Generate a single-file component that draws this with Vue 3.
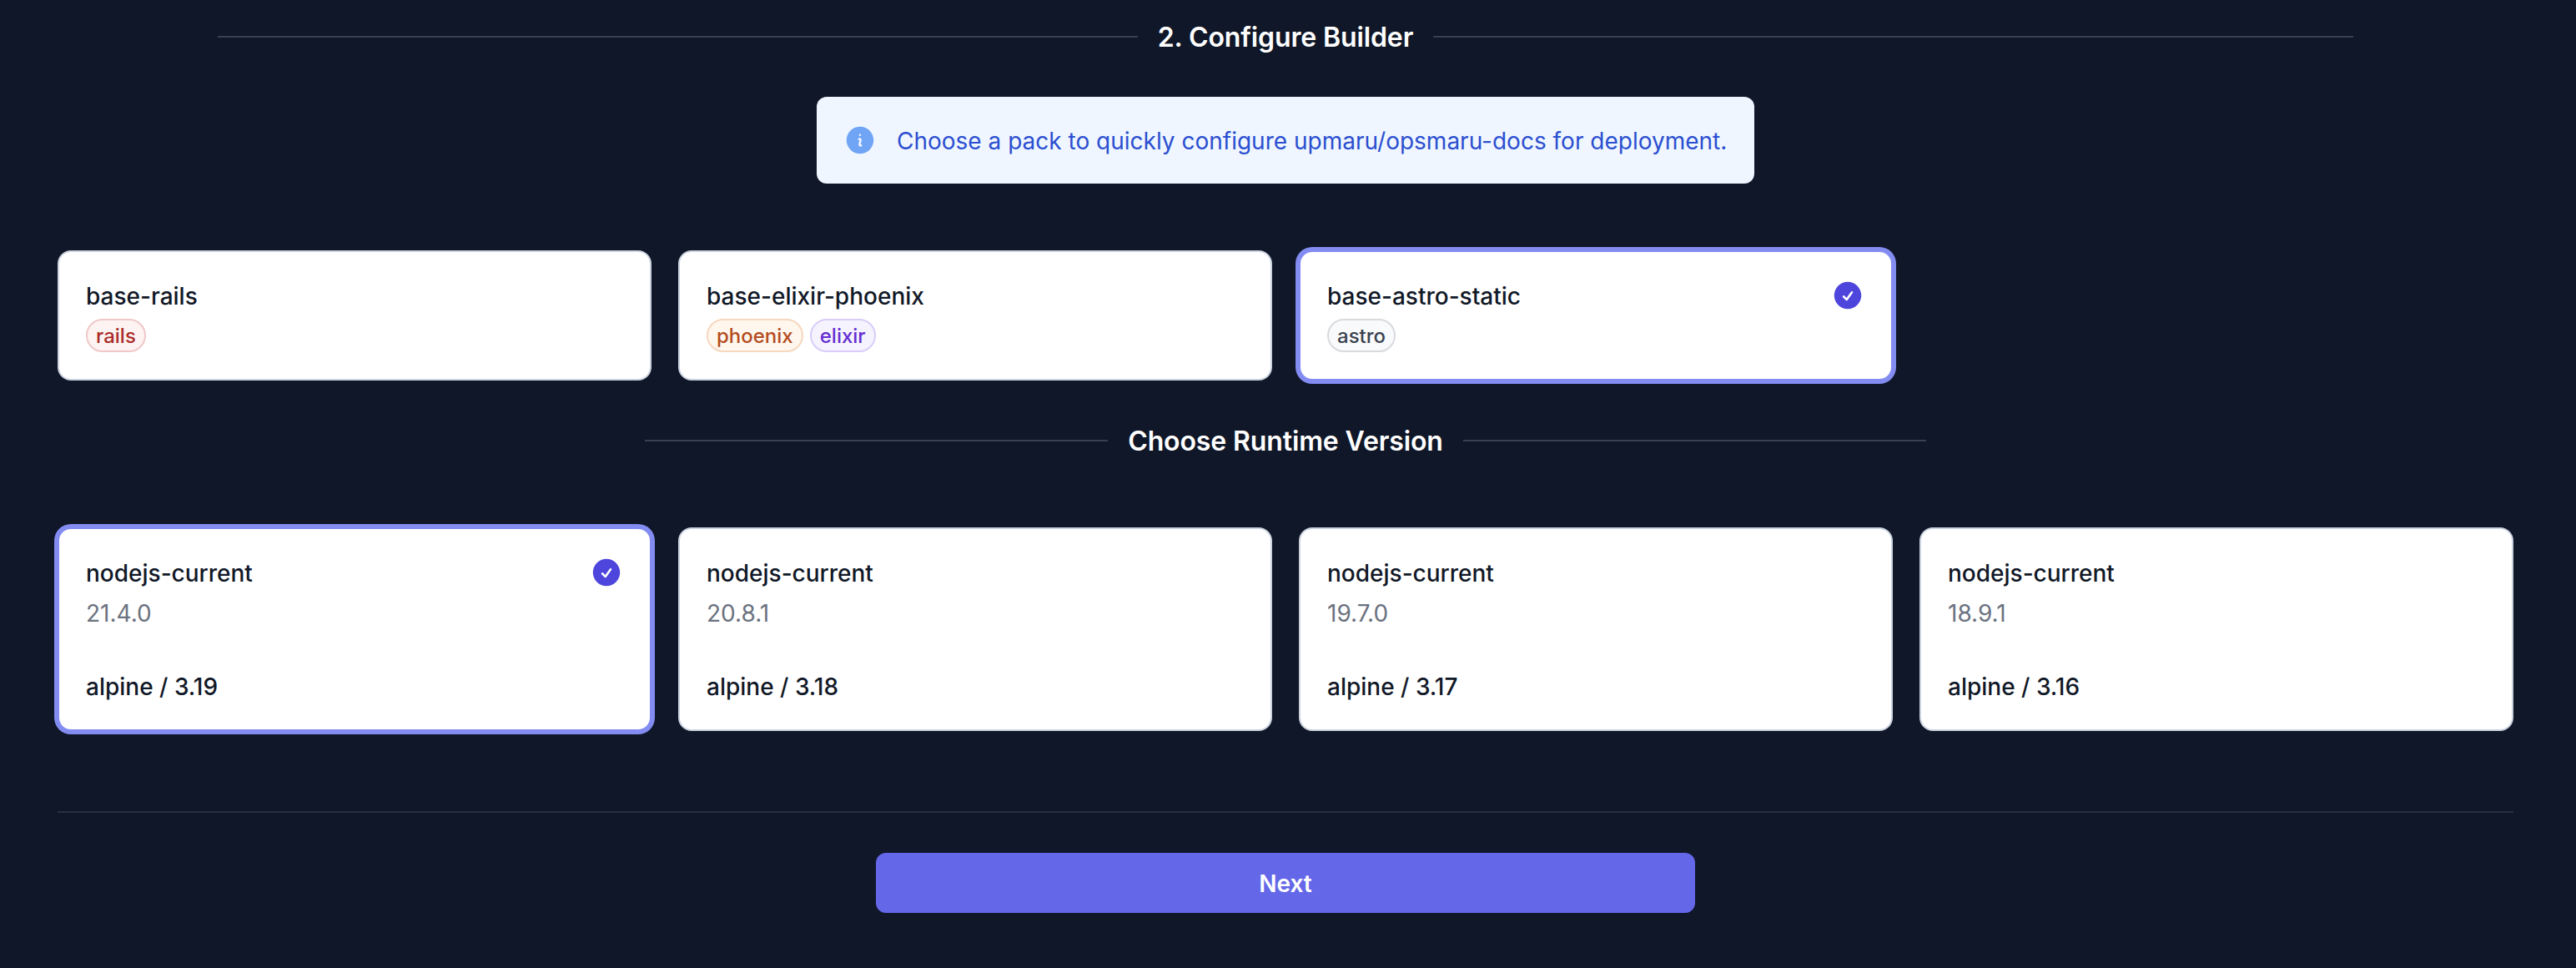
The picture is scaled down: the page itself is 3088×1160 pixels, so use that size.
<script setup>
import { ref } from 'vue'

const packs = [
  { name: 'base-rails', tags: [{ label: 'rails', tone: 'red' }] },
  {
    name: 'base-elixir-phoenix',
    tags: [
      { label: 'phoenix', tone: 'orange' },
      { label: 'elixir', tone: 'violet' },
    ],
  },
  { name: 'base-astro-static', tags: [{ label: 'astro', tone: 'gray' }] },
]

const runtimes = [
  { name: 'nodejs-current', version: '21.4.0', os: 'alpine / 3.19' },
  { name: 'nodejs-current', version: '20.8.1', os: 'alpine / 3.18' },
  { name: 'nodejs-current', version: '19.7.0', os: 'alpine / 3.17' },
  { name: 'nodejs-current', version: '18.9.1', os: 'alpine / 3.16' },
]

const selectedPack = ref(2)
const selectedRuntime = ref(0)
</script>

<template>
  <main class="page">
    <div class="divider divider-wide">
      <h2>2. Configure Builder</h2>
    </div>

    <div class="alert">
      <svg class="icon icon-info" viewBox="0 0 24 24" fill="currentColor" aria-hidden="true">
        <path
          fill-rule="evenodd"
          clip-rule="evenodd"
          d="M2.25 12c0-5.385 4.365-9.75 9.75-9.75s9.75 4.365 9.75 9.75-4.365 9.75-9.75 9.75S2.25 17.385 2.25 12Zm8.706-1.442c1.146-.573 2.437.463 2.126 1.706l-.709 2.836.042-.02a.75.75 0 0 1 .67 1.34l-.04.022c-1.147.573-2.438-.463-2.127-1.706l.71-2.836-.042.02a.75.75 0 1 1-.671-1.34l.041-.022ZM12 9a.75.75 0 1 0 0-1.5.75.75 0 0 0 0 1.5Z"
        />
      </svg>
      <p>Choose a pack to quickly configure upmaru/opsmaru-docs for deployment.</p>
    </div>

    <div class="grid packs">
      <div
        v-for="(pack, i) in packs"
        :key="pack.name"
        class="card"
        :class="{ selected: i === selectedPack }"
        @click="selectedPack = i"
      >
        <div class="body">
          <span class="name">{{ pack.name }}</span>
          <div class="tags">
            <span v-for="tag in pack.tags" :key="tag.label" class="tag" :class="tag.tone">{{ tag.label }}</span>
          </div>
        </div>
        <svg v-if="i === selectedPack" class="icon icon-check" viewBox="0 0 24 24" fill="currentColor" aria-hidden="true">
          <path
            fill-rule="evenodd"
            clip-rule="evenodd"
            d="M2.25 12c0-5.385 4.365-9.75 9.75-9.75s9.75 4.365 9.75 9.75-4.365 9.75-9.75 9.75S2.25 17.385 2.25 12Zm13.36-1.814a.75.75 0 1 0-1.22-.872l-3.236 4.53L9.53 12.22a.75.75 0 0 0-1.06 1.06l2.25 2.25a.75.75 0 0 0 1.14-.094l3.75-5.25Z"
          />
        </svg>
      </div>
    </div>

    <div class="divider divider-narrow">
      <h2>Choose Runtime Version</h2>
    </div>

    <div class="grid runtimes">
      <div
        v-for="(runtime, i) in runtimes"
        :key="runtime.version"
        class="card"
        :class="{ selected: i === selectedRuntime }"
        @click="selectedRuntime = i"
      >
        <div class="body">
          <span class="name">{{ runtime.name }}</span>
          <span class="version">{{ runtime.version }}</span>
          <span class="name os">{{ runtime.os }}</span>
        </div>
        <svg v-if="i === selectedRuntime" class="icon icon-check" viewBox="0 0 24 24" fill="currentColor" aria-hidden="true">
          <path
            fill-rule="evenodd"
            clip-rule="evenodd"
            d="M2.25 12c0-5.385 4.365-9.75 9.75-9.75s9.75 4.365 9.75 9.75-4.365 9.75-9.75 9.75S2.25 17.385 2.25 12Zm13.36-1.814a.75.75 0 1 0-1.22-.872l-3.236 4.53L9.53 12.22a.75.75 0 0 0-1.06 1.06l2.25 2.25a.75.75 0 0 0 1.14-.094l3.75-5.25Z"
          />
        </svg>
      </div>
    </div>

    <footer class="footer">
      <button type="button" class="next">Next</button>
    </footer>
  </main>
</template>

<style>
body {
  margin: 0;
  background: #101728;
}
</style>

<style scoped>
.page {
  box-sizing: border-box;
  min-height: 1160px;
  padding: 20px 75px 0 69px;
  display: flex;
  flex-direction: column;
  align-items: center;
  background: #101728;
  font-family: Inter, 'Liberation Sans', sans-serif;
  font-size: 28px;
  line-height: 38px;
}

.divider {
  display: flex;
  align-items: center;
  gap: 24px;
}

.divider::before,
.divider::after {
  content: '';
  flex: 1;
  height: 2px;
  background: #374151;
}

.divider h2 {
  margin: 0;
  padding-top: 2px;
  color: #fff;
  font-size: 32px;
  font-weight: 600;
  line-height: 46px;
  letter-spacing: -0.12px;
  white-space: nowrap;
}

.divider-wide {
  width: 2560px;
}

.divider-narrow {
  width: 1536px;
  margin-top: 48px;
}

.alert {
  box-sizing: border-box;
  width: 1124px;
  margin-top: 48px;
  padding: 32px;
  display: flex;
  gap: 24px;
  border-radius: 12px;
  background: #eff6ff;
}

.alert p {
  margin: 0;
  padding-top: 2px;
  color: #2b4fd0;
  white-space: nowrap;
}

.icon {
  flex: none;
  width: 40px;
  height: 40px;
}

.icon-info {
  color: #70a4f5;
}

.icon-check {
  color: #4e46dc;
}

.grid {
  width: 100%;
  margin-top: 80px;
  display: grid;
  grid-template-columns: repeat(4, 1fr);
  gap: 32px;
}

.card {
  display: flex;
  padding: 32px;
  border: 2px solid #cbd3e0;
  border-radius: 16px;
  background: #fff;
  cursor: pointer;
}

.card.selected {
  border-color: #838cf1;
  box-shadow: 0 0 0 4px #838cf1;
}

.body {
  flex: 1;
  display: flex;
  flex-direction: column;
}

.name {
  padding-top: 2px;
  color: #111827;
  font-weight: 500;
}

.version {
  margin-top: 8px;
  padding-top: 2px;
  color: #6b7280;
}

.os {
  margin-top: 48px;
}

.tags {
  margin-top: 8px;
  display: flex;
  gap: 8px;
}

.tag {
  padding: 1px 10px 0;
  border: 2px solid;
  border-radius: 20px;
  font-size: 24px;
  font-weight: 500;
  line-height: 35px;
}

.red {
  color: #aa2c27;
  border-color: #f0c8c8;
  background: #fcf3f2;
}

.orange {
  color: #b44c20;
  border-color: #f6d7bf;
  background: #fff7ee;
}

.violet {
  color: #642dd2;
  border-color: #d9cdf8;
  background: #f5f3fe;
}

.gray {
  color: #3a4351;
  border-color: #d8dade;
  background: #f9fafb;
}

.footer {
  width: 100%;
  margin-top: 96px;
  padding-top: 48px;
  display: flex;
  justify-content: center;
  border-top: 2px solid #282f40;
}

.next {
  width: 33.3333%;
  padding: 18px 16px 16px;
  border: 0;
  border-radius: 12px;
  background: #6467e8;
  color: #fff;
  font: 600 28px/38px Inter, 'Liberation Sans', sans-serif;
  cursor: pointer;
}
</style>
